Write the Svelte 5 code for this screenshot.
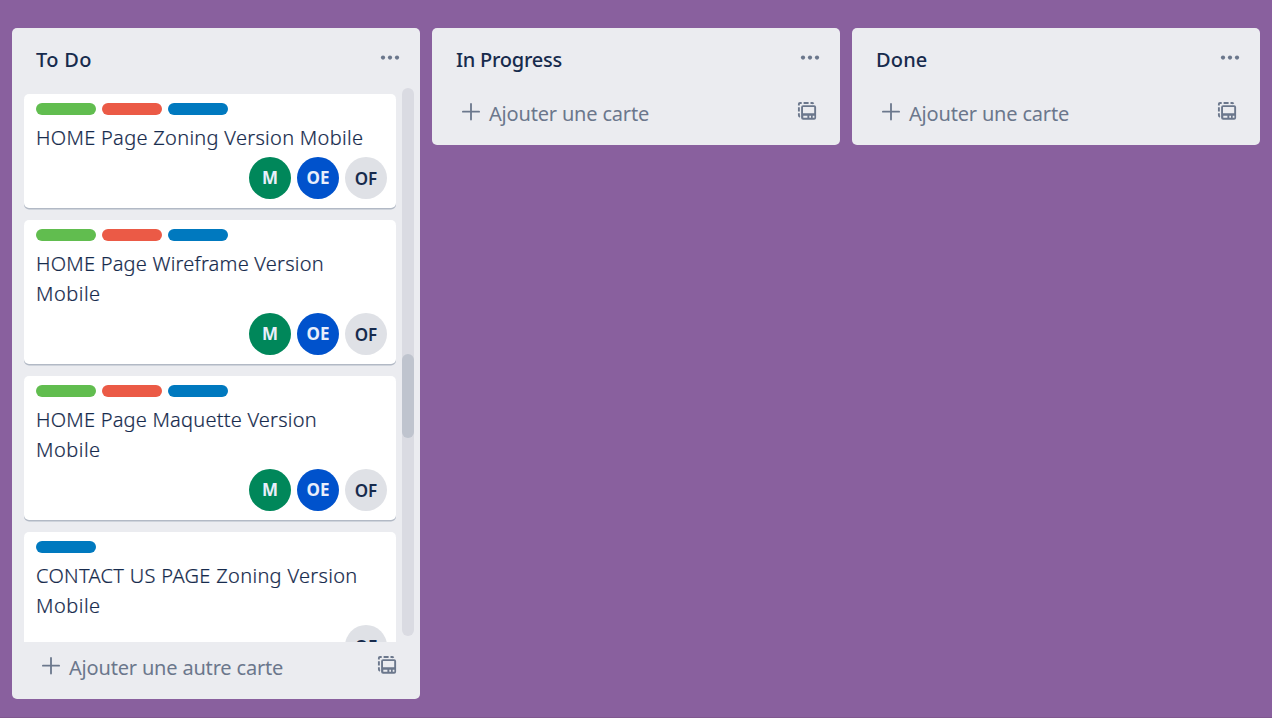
<script>
  const all = ['green', 'red', 'blue'];
  const team = ['M', 'OE', 'OF'];
  // Each title line carries its own tracking in pixels.
  const mobile = { text: 'Mobile', tracking: 0.5 };
  const lists = [
    {
      title: 'To Do',
      spacing: 0.35,
      add: 'Ajouter une autre carte',
      cards: [
        { labels: all, members: team, lines: [{ text: 'HOME Page Zoning Version Mobile', tracking: 0.3 }] },
        { labels: all, members: team, lines: [{ text: 'HOME Page Wireframe Version', tracking: 0.22 }, mobile] },
        { labels: all, members: team, lines: [{ text: 'HOME Page Maquette Version', tracking: 0.22 }, mobile] },
        { labels: ['blue'], members: ['OF'], lines: [{ text: 'CONTACT US PAGE Zoning Version', tracking: 0.32 }, mobile] }
      ]
    },
    { title: 'In Progress', spacing: -0.25, add: 'Ajouter une carte', cards: [] },
    { title: 'Done', spacing: 0.15, add: 'Ajouter une carte', cards: [] }
  ];
</script>

<main class="board">
  {#each lists as list}
    <section class="list" class:full={list.cards.length > 0}>
      <header>
        <h2><span style="letter-spacing: {list.spacing}px">{list.title}</span></h2>
        <svg class="dots" width="20" height="6" viewBox="0 0 20 6">
          <circle cx="3" cy="2.6" r="2.1" /><circle cx="10" cy="2.6" r="2.1" /><circle cx="17" cy="2.6" r="2.1" />
        </svg>
      </header>
      {#if list.cards.length}
        <div class="scroller">
          <div class="cards">
            {#each list.cards as card}
              <article>
                <div class="labels">
                  {#each card.labels as label}<i class={label}></i>{/each}
                </div>
                <div class="name">
                  {#each card.lines as line}<div style="letter-spacing: {line.tracking}px">{line.text}</div>{/each}
                </div>
                <div class="members">
                  {#each card.members as member}<b class={member}>{member}</b>{/each}
                </div>
              </article>
            {/each}
          </div>
          <div class="track"><div class="thumb"></div></div>
        </div>
      {/if}
      <footer>
        <svg class="plus" width="18" height="18" viewBox="0 0 18 18">
          <path d="M9 .9V16.5M.9 8.7H17.1" />
        </svg>
        <span class="add">{list.add}</span>
        <svg class="template" width="21" height="20" viewBox="0 0 21 20">
          <path class="dash" d="M1.9 4.5V3Q1.9 2 3 2H4.7M6.6 2H11.6M13.5 2H15Q16 2 16.4 2.9M1.9 6.3V10.4M1.9 12.3V14.3Q1.9 15.4 3 15.8" />
          <path class="solid" fill-rule="evenodd" d="M6.1 4.2H17.1Q19.1 4.2 19.1 6.2V16.7Q19.1 18.7 17.1 18.7H6.1Q4.1 18.7 4.1 16.7V6.2Q4.1 4.2 6.1 4.2ZM6 6V12.2H17.2V6ZM6.3 14.8V16.7H10.4V14.8ZM12.3 14.8V16.7H14V14.8ZM15.7 14.8V16.7H17.4V14.8Z" />
        </svg>
      </footer>
    </section>
  {/each}
</main>

<style>
  :global(body) { background: #89609e; overflow: hidden; }
  .board {
    box-sizing: border-box;
    height: 718px;
    padding: 28px 12px 0;
    display: flex;
    align-items: flex-start;
    gap: 12px;
    border-bottom: 1px solid #80588f;
    background: #89609e;
    color: #172b4d;
    font-family: "Noto Sans", "Open Sans", sans-serif;
    font-size: 20px;
  }
  .list {
    width: 408px;
    height: 117px;
    display: flex;
    flex-direction: column;
    background: #ebecf0;
    border-radius: 5px;
  }
  .full { height: 671px; }
  header {
    height: 60px;
    flex: none;
    box-sizing: border-box;
    padding: 0 20px 0 24px;
    display: flex;
    justify-content: space-between;
  }
  h2 { margin: 17px 0 0; font-size: 20px; line-height: 30px; font-weight: 500; white-space: nowrap; }
  .dots { margin-top: 27px; fill: #6b778c; }
  .scroller { height: 554px; flex: none; display: flex; padding-left: 12px; }
  .cards { width: 372px; height: 554px; padding-top: 6px; box-sizing: border-box; overflow: hidden; }
  article {
    box-sizing: border-box;
    margin-bottom: 12px;
    padding: 9px 9px 9px 12px;
    background: #fff;
    border-radius: 5px;
    box-shadow: 0 1.5px 0 #b2b9c5;
  }
  .labels { height: 12px; display: flex; gap: 6px; }
  .labels i { width: 60px; height: 12px; border-radius: 6px; }
  .green { background: #61bd4f; }
  .red { background: #eb5a46; }
  .blue { background: #0079bf; }
  .name {
    padding: 8px 0 4px;
    line-height: 30px;
    font-weight: 300;
    white-space: nowrap;
    -webkit-text-stroke: 0.2px #172b4d;
  }
  .members { display: flex; justify-content: flex-end; gap: 6px; }
  .members b {
    width: 42px;
    height: 42px;
    border-radius: 50%;
    text-align: center;
    line-height: 43px;
    font-size: 17px;
    font-weight: 600;
    color: #e8eefb;
  }
  .members .M { background: #00875a; line-height: 42px; font-weight: 700; }
  .members .OE { background: #0052cc; line-height: 42px; font-weight: 700; }
  .members .OF { background: #dfe1e6; color: #172b4d; }
  .track { display: flow-root; width: 12px; height: 548px; margin-left: 6px; border-radius: 6px; background: #dadbe2; }
  .thumb { height: 84px; margin-top: 266px; border-radius: 6px; background: #bfc4ce; }
  footer {
    display: flex;
    align-items: flex-start;
    height: 57px;
    padding: 0 22px 0 30px;
    color: #6b778c;
  }
  .plus { margin-top: 15px; fill: none; stroke: #6b778c; stroke-width: 1.8; stroke-linecap: round; }
  .add { margin: 11px auto 0 9px; line-height: 30px; letter-spacing: -0.18px; white-space: nowrap; }
  .template { margin-top: 13px; }
  .dash { fill: none; stroke: #6b778c; stroke-width: 1.9; }
  .solid { fill: #6b778c; }
</style>
